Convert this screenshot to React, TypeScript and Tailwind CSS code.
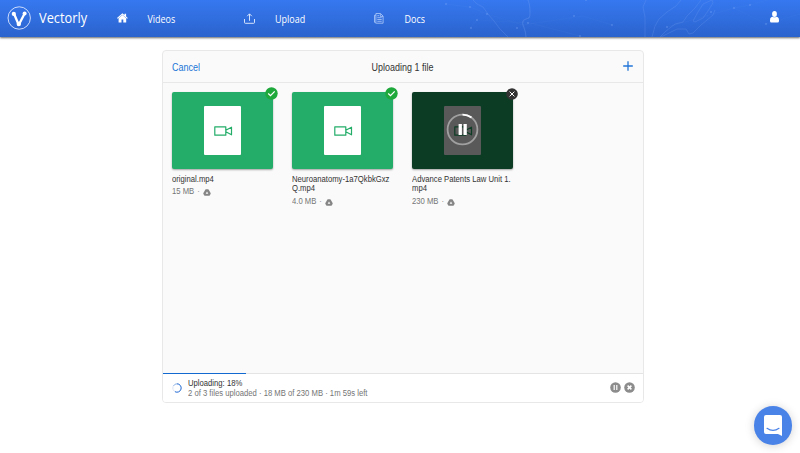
import React from "react";

const UI = "font-['Liberation_Sans',Arial,sans-serif]";

function Logo() {
  return (
    <svg className="h-6 w-6 shrink-0" viewBox="0 0 24 24" fill="none">
      <circle cx="12.2" cy="12" r="11.2" stroke="#dbe7ff" strokeWidth="0.9" />
      <path d="M7 7.8 11.400 18M17.500 7.800 12.200 18" stroke="#fff" strokeWidth="2.300" />
      <circle cx="6.800" cy="7.900" r="2.100" fill="#fff" />
      <circle cx="17.600" cy="7.600" r="2" fill="#fff" />
      <circle cx="11.800" cy="18" r="2.200" fill="#fff" />
    </svg>
  );
}

function HeaderPattern() {
  return (
    <svg className="absolute right-0 top-0 h-[37px] w-[360px]" viewBox="440 0 360 37" fill="none" stroke="#7ea8f5" strokeOpacity="0.28" strokeWidth="0.8">
      <path d="M473 0l4 4 6 3 5 7 6 7 6 8 8 8" />
      <path d="M528 0c2 4 2 8 2 13s-1 5-4 6-4 3-3 6 3 6 3 12" strokeWidth="1.1" />
      <path d="M646 0l-3 7 2 10v20M681 0l-5 6-9 6-8 7-4 7-3 11M701 0l-6 8-8 8-4 6-8 2-9 7-6 6M712 0l-9 4-5 8-5 9 2 1 8-4 5-7 5-8-1-4M715 10l-2 5-12 10-8 8-4 1-3-5-9 0-8 4-8 4" />
      <g strokeOpacity="0.1" strokeWidth="0.6">
        <path d="M446 4l24 3 17 7 36 11 60-9 29 9M470 28l7-8 53 3 50 13M734 8l16-3 18-5M734 8l32 16M667 27l67-19M766 24l34-10" />
      </g>
      <g fill="#8db3f9" fillOpacity="0.32" stroke="none">
        <circle cx="446" cy="4" r="1" /><circle cx="470" cy="7" r="1" /><circle cx="477" cy="20" r="1" />
        <circle cx="471" cy="28" r="1" /><circle cx="487" cy="14" r="1" /><circle cx="517" cy="28" r="1" />
        <circle cx="528" cy="23" r="1" /><circle cx="574" cy="16" r="1" /><circle cx="586" cy="0" r="1" />
        <circle cx="580" cy="36" r="1" /><circle cx="612" cy="25" r="1" /><circle cx="667" cy="27" r="1" />
        <circle cx="711" cy="12" r="1" /><circle cx="734" cy="8" r="1" /><circle cx="750" cy="5" r="1" />
        <circle cx="766" cy="24" r="1" />
      </g>
    </svg>
  );
}

function HomeIcon() {
  return (
    <svg className="mb-px h-[10px] w-[11px]" viewBox="0 0 11 10" fill="#fff">
      <path d="M5.400.3 0 4.900l.7.9 4.700-4 4.700 4 .7-.9-1.700-1.500V.8H7.500v1.300z" />
      <path d="M5.400 2.100 1.600 5.300v4.200h2.900V6.600h1.800v2.900h2.900V5.300z" />
    </svg>
  );
}

function UploadIcon() {
  return (
    <svg className="mb-px h-[11px] w-[12px]" viewBox="0 0 12 11" fill="none" stroke="#e6efff" strokeWidth="0.9">
      <path d="M.5 6v3.500q0 .8.8.8h8.400q.8 0 .8-.8V6M5.500 7.800V1M3.200 3.200l2.300-2.400 2.300 2.400" />
    </svg>
  );
}

function DocsIcon() {
  return (
    <svg className="mb-px h-[11px] w-[10px]" viewBox="0 0 10 11" fill="none" stroke="#b3cdfa" strokeWidth="0.8">
      <path d="M1.900.5h4.600l2.600 2.600v7.100H2.200L.5 9.300V2.200h1.400M1.900.5v9.200M6.300.8v2.600H9M3.300 2.700h1.800M3.300 4.700h4.400M3.300 6.500h4.400M3.300 8.300h4.400" />
    </svg>
  );
}

function UserIcon() {
  return (
    <svg className="h-3 w-[9px]" viewBox="0 0 9 12" fill="#fff">
      <ellipse cx="4.500" cy="3" rx="2.400" ry="2.900" />
      <path d="M2.600 5.800 1.200 6.300Q0 6.900 0 9.300v.6q0 1.500 1.400 1.500h6.200Q9 11.400 9 9.900v-.6Q9 6.900 7.800 6.300l-1.400-.5q-1.900 1-3.800 0z" />
    </svg>
  );
}

function Header() {
  return (
    <header className="relative flex h-[37px] items-center bg-linear-to-b from-[#3678f0] to-[#2b63cd] font-['Open_Sans'] text-white shadow-[0_1px_2px_rgba(0,0,0,0.6)]">
      <HeaderPattern />
      <div className="flex w-[109px] items-center gap-2 pb-px pl-[7px]">
        <Logo />
        <span className="scale-y-[1.08] text-[12.8px] leading-5">Vectorly</span>
      </div>
      <nav className="flex flex-1 items-center text-[8.960px] leading-4">
        <a className="flex w-[127px] items-center gap-[19.500px] pl-[8px]"><HomeIcon /><span className="scale-y-[1.2]">Videos</span></a>
        <a className="flex w-[130px] items-center gap-[19px] pl-[8px]"><UploadIcon /><span className="scale-y-[1.2]">Upload</span></a>
        <a className="flex items-center gap-[20.500px] pl-[8px]"><DocsIcon /><span className="scale-y-[1.2]">Docs</span></a>
      </nav>
      <div className="relative mb-[4px] mr-[21px]"><UserIcon /></div>
    </header>
  );
}

function DriveIcon() {
  return (
    <svg className="mt-px h-[7px] w-[8px]" viewBox="0 0 8 7" fill="#858585">
      <path fillRule="evenodd" d="M3 .2h2q.4 0 .6.4l2 3.500q.2.4 0 .8l-.8 1.400q-.2.5-.7.500H1.900q-.5 0-.7-.500L.4 4.900q-.2-.4 0-.8l2-3.500Q2.600.2 3 .2zM4 2.400 2.700 4.700h2.600z" />
    </svg>
  );
}

function VideoGlyph({ color }: { color: string }) {
  return (
    <svg className="h-[10px] w-[19px]" viewBox="0 0 19 10" fill="none" stroke={color} strokeWidth="1.200">
      <path d="M.8.8h11v8.400H.8zM11.800 4.200l5.700-3v7.600l-5.700-3" strokeLinejoin="round" />
    </svg>
  );
}

type FileItem = { lines: string[]; size: string; done: boolean };

const files: FileItem[] = [
  { lines: ["original.mp4"], size: "15 MB", done: true },
  { lines: ["Neuroanatomy-1a7QkbkGxz", "Q.mp4"], size: "4.0 MB", done: true },
  { lines: ["Advance Patents Law Unit 1.", "mp4"], size: "230 MB", done: false },
];

function FileCard({ file }: { file: FileItem }) {
  return (
    <article className="w-[101px]">
      <div className={`relative flex h-[77px] items-center justify-center rounded-[2px] shadow-[0_1px_2px_rgba(0,0,0,0.35)] ${file.done ? "bg-[#23ad69]" : "bg-[#0d3c25]"}`}>
        <div className={`flex h-[49px] w-[37px] items-center justify-center rounded-[1px] pl-px ${file.done ? "bg-white" : "bg-[#595959]"}`}>
          <VideoGlyph color={file.done ? "#23ad69" : "#0d3c25"} />
        </div>
        {!file.done && (
          <svg className="absolute left-[34px] top-[21px] h-[33px] w-[33px]" viewBox="0 0 33 33" fill="none">
            <circle cx="16.500" cy="16.500" r="14.900" stroke="#a0a0a0" strokeWidth="1.800" />
            <path d="M16.500 1.600a14.900 14.900 0 0 1 9 3" stroke="#fff" strokeWidth="1.900" />
            <path d="M12.600 11h3.300v11h-3.300zM17.500 11h3.300v11h-3.300z" fill="#fff" />
          </svg>
        )}
        {file.done ? (
          <svg className="absolute -right-[5px] -top-[5px] h-[13px] w-[13px]" viewBox="0 0 13 13">
            <circle cx="6.500" cy="6.500" r="6.200" fill="#1fa93c" />
            <path d="M3.200 6.500 5.500 8.700l4.200-4.300" fill="none" stroke="#fff" strokeWidth="1.300" />
          </svg>
        ) : (
          <svg className="absolute -right-[5px] -top-[4px] h-[12px] w-[12px]" viewBox="0 0 12 12">
            <circle cx="6" cy="6" r="5.800" fill="#333" />
            <path d="m3.600 3.600 4.800 4.800M8.400 3.600 3.600 8.400" stroke="#fff" strokeWidth="1" />
          </svg>
        )}
      </div>
      <div className="mt-[5.500px] whitespace-nowrap text-[7.700px] leading-[9.500px] text-[#333]">
        {file.lines.map((line) => <div key={line} className="scale-y-[1.12]">{line}</div>)}
      </div>
      <div className="mt-[3px] flex items-center gap-[3px] text-[7.700px] leading-[10px] text-[#757575]">
        <span className="scale-y-[1.12]">{file.size}</span><span>·</span><DriveIcon />
      </div>
    </article>
  );
}

function StatusBar() {
  return (
    <footer className="relative flex h-[29px] items-center border-t border-[#e4e4e4] bg-white pl-[9px] pr-[8px]">
      <div className="absolute -top-px left-0 h-px w-[83px] bg-[#1269cf]" />
      <svg className="h-[10px] w-[10px]" viewBox="0 0 10 10" fill="none">
        <circle cx="5" cy="5" r="4.200" stroke="#dce5f3" strokeWidth="1" />
        <path d="M1.400 3a4.200 4.200 0 0 1 3.600-2.200" stroke="#9dbdea" strokeWidth="1" />
        <path d="M5 .8a4.200 4.200 0 1 1-2 7.900" stroke="#2c72d8" strokeWidth="1" />
      </svg>
      <div className="ml-[6px] flex-1 whitespace-nowrap pt-px text-[7.700px] leading-[10px]">
        <div className="scale-y-[1.12] text-[#333]">Uploading: 18%</div>
        <div className="scale-y-[1.12] text-[#757575]">2 of 3 files uploaded · 18 MB of 230 MB · 1m 59s left</div>
      </div>
      <div className="flex gap-[3px] pb-px">
        <svg className="h-[11px] w-[11px]" viewBox="0 0 11 11">
          <circle cx="5.500" cy="5.500" r="5.300" fill="#8c8c8c" />
          <path d="M3.600 3h1.200v5H3.600zM6.200 3h1.200v5H6.200z" fill="#fff" />
        </svg>
        <svg className="h-[11px] w-[11px]" viewBox="0 0 11 11">
          <circle cx="5.500" cy="5.500" r="5.300" fill="#8c8c8c" />
          <path d="m3.600 3.600 3.800 3.800M7.400 3.600 3.600 7.400" stroke="#fff" strokeWidth="1.500" />
        </svg>
      </div>
    </footer>
  );
}

export default function App() {
  return (
    <div className="relative h-[453px] w-[800px] overflow-hidden bg-white">
      <Header />
      <main className={`ml-[162px] mt-[13px] flex h-[353px] w-[482px] flex-col overflow-hidden rounded-[4px] border border-[#e8e8e8] bg-[#fafafa] ${UI}`}>
        <div className="grid h-[32px] grid-cols-3 items-center border-b border-[#e8e8e8] pl-[9px] pr-[10px] text-[8.980px] leading-4">
          <button className="scale-y-[1.18] text-left text-[#2275d7]">Cancel</button>
          <h1 className="scale-y-[1.18] whitespace-nowrap text-center text-[#333]">Uploading 1 file</h1>
          <svg className="mb-px h-[10px] w-[10px] justify-self-end" viewBox="0 0 10 10" stroke="#2275d7" strokeWidth="1.300">
            <path d="M5 .2v9.600M.2 5h9.600" />
          </svg>
        </div>
        <section className="flex flex-1 items-start gap-[19px] pl-[9px] pt-[9px]">
          {files.map((file) => <FileCard key={file.size} file={file} />)}
        </section>
        <StatusBar />
      </main>
      <button className="absolute bottom-[8.500px] right-[8px] flex h-[38.500px] w-[38.500px] items-center justify-center rounded-full bg-[#4a83e8] shadow-[0_1px_10px_rgba(0,0,0,0.18)]">
        <svg className="h-[21px] w-[18px]" viewBox="0 0 18 21">
          <path d="M2 0h14q2 0 2 2v19l-4-2H2q-2 0-2-2V2Q0 0 2 0z" fill="#fff" />
          <path d="M3 13.300q6 4.200 12 0" fill="none" stroke="#4a83e8" strokeWidth="1.200" strokeLinecap="round" />
        </svg>
      </button>
    </div>
  );
}
